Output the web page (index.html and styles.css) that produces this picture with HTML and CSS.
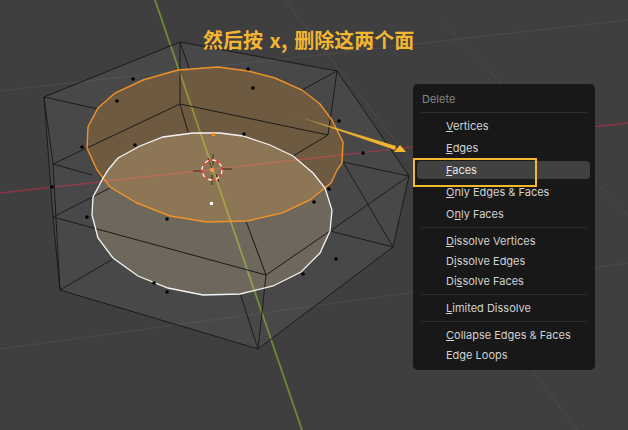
FILE: index.html
```html
<!DOCTYPE html>
<html lang="en">

<head>
    <meta charset="UTF-8">
    <title>Delete menu</title>
    <link rel="stylesheet" href="styles.css">
</head>

<body>
    <div class="viewport">
        <!-- 3D scene -->
        <svg class="scene" width="628" height="430" viewBox="0 0 628 430">
            <defs>
                <linearGradient id="arrowFade" gradientUnits="userSpaceOnUse" x1="292" y1="115" x2="400" y2="150">
                    <stop offset="0" stop-color="#f5b92e" stop-opacity="0.1"/>
                    <stop offset="0.4" stop-color="#f5b92e" stop-opacity="0.85"/>
                    <stop offset="1" stop-color="#f5b92e"/>
                </linearGradient>
            </defs>

            <!-- floor grid -->
            <g class="grid">
                <line x1="0" y1="349" x2="628" y2="263"/>
                <line x1="0" y1="91" x2="628" y2="20"/>
                <line x1="285" y1="0" x2="413" y2="163"/>
                <line x1="440" y1="20" x2="628" y2="215"/>
                <line x1="532" y1="370" x2="577" y2="430"/>
            </g>

            <!-- axes -->
            <line class="axis-x" x1="0" y1="193" x2="628" y2="123"/>
            <line class="axis-y" x1="155" y1="0" x2="302" y2="430"/>

            <!-- faces -->
            <polygon class="cage" points="44,97 180,42 337,71 409,176 393,247 258,349 60,290 53,217"/>
            <polygon class="face-orange" points="87,148 88,127 98,108 115,93 143,80 178,70 218,67 248,71 275,78 302,90 320,104 332,120 343,142 342,163 337,170 331,183 310,200 282,213 247,221 207,222 170,216 137,203 110,187 97,170"/>
            <polygon class="face-white" points="108,170 118,158 140,146 163,137 193,133 220,133 243,136 270,145 293,156 313,173 325,188 332,210 330,231 320,253 301,272 273,286 240,294 203,295 168,288 138,276 113,258 98,238 92,215 93,197 102,180"/>

            <!-- wire edges -->
            <path class="wire" d="M44 97L180 42L337 71L409 176L393 247L258 349L60 290L53 217L44 97
                M44 97L53 164L60 290
                M53 164L180 104L328 135L337 71
                M53 164L92 175
                M53 217L110 188
                M53 217L266 275L258 349
                M60 290L113 259
                M240 293L258 349
                M266 275L246 221
                M266 275L330 231L409 176
                M330 231L393 247
                M343 162L393 247
                M343 162L409 176
                M328 135L293 156
                M180 42L180 104L188 132
                M44 97L98 109
                M337 71L302 90
                M180 42L189 68"/>

            <!-- selected outlines -->
            <polygon class="edge-orange" points="87,148 88,127 98,108 115,93 143,80 178,70 218,67 248,71 275,78 302,90 320,104 332,120 343,142 342,163 337,170 331,183 310,200 282,213 247,221 207,222 170,216 137,203 110,187 97,170"/>
            <polygon class="edge-white" points="108,170 118,158 140,146 163,137 193,133 220,133 243,136 270,145 293,156 313,173 325,188 332,210 330,231 320,253 301,272 273,286 240,294 203,295 168,288 138,276 113,258 98,238 92,215 93,197 102,180"/>

            <!-- face dots -->
            <g class="dots">
                <circle cx="133" cy="79" r="1.8"/>
                <circle cx="117" cy="101" r="1.8"/>
                <circle cx="82" cy="147" r="1.8"/>
                <circle cx="135" cy="145" r="1.8"/>
                <circle cx="52" cy="187" r="1.8"/>
                <circle cx="87" cy="217" r="1.8"/>
                <circle cx="167" cy="219" r="1.8"/>
                <circle cx="154" cy="283" r="1.8"/>
                <circle cx="167" cy="292" r="1.8"/>
                <circle cx="244" cy="134" r="1.8"/>
                <circle cx="248" cy="69" r="1.8"/>
                <circle cx="253" cy="88" r="1.8"/>
                <circle cx="339" cy="121" r="1.8"/>
                <circle cx="363" cy="153" r="1.8"/>
                <circle cx="329" cy="189" r="1.8"/>
                <circle cx="314" cy="202" r="1.8"/>
                <circle cx="336" cy="259" r="1.8"/>
                <circle cx="303" cy="274" r="1.8"/>
            </g>
            <rect class="dot-white" x="210" y="202" width="3" height="3"/>
            <rect class="dot-orange" x="212" y="133" width="3" height="3"/>

            <!-- 3D cursor -->
            <path class="cursor-ticks" d="M213 154V165M212 175V185M193 171H202M222 169H232M208 158L212 168M216 174L219 182"/>
            <circle class="cursor-red" cx="212" cy="170" r="10"/>
            <circle class="cursor-white" cx="212" cy="170" r="10"/>
            <circle class="dot-origin" cx="212" cy="170" r="2"/>

            <!-- arrow -->
            <polygon fill="url(#arrowFade)" points="292,114.5 396,146 395,150"/>
            <polygon class="arrow-head" points="406,152 400,145 394,152"/>
        </svg>

        <h1 class="caption">然后按 x, 删除这两个面</h1>

        <div class="menu">
            <div class="menu-title">Delete</div>
            <div class="menu-sep menu-sep-title"></div>
            <div class="menu-item tall"><u>V</u>ertices</div>
            <div class="menu-item tall"><u>E</u>dges</div>
            <div class="menu-item tall active"><u>F</u>aces</div>
            <div class="menu-item tall"><u>O</u>nly Edges &amp; Faces</div>
            <div class="menu-item tall">O<u>n</u>ly Faces</div>
            <div class="menu-sep"></div>
            <div class="menu-item"><u>D</u>issolve Vertices</div>
            <div class="menu-item">D<u>i</u>ssolve Edges</div>
            <div class="menu-item">Di<u>s</u>solve Faces</div>
            <div class="menu-sep"></div>
            <div class="menu-item"><u>L</u>imited Dissolve</div>
            <div class="menu-sep"></div>
            <div class="menu-item"><u>C</u>ollapse Edges &amp; Faces</div>
            <div class="menu-item">Ed<u>g</u>e Loops</div>
            <div class="menu-mark"></div>
        </div>
    </div>
</body>

</html>
```
FILE: styles.css
```css
/* General Styles */
body {
    margin: 0;
    background-color: #3f3f3f;
}

.viewport {
    position: relative;
    width: 628px;
    height: 430px;
    overflow: hidden;
    background-color: #3f3f3f;
}

.scene {
    position: absolute;
    left: 0;
    top: 0;
}

/* Scene */
.grid line {
    stroke: #4c4c4c;
    stroke-width: 1;
}

.axis-x {
    stroke: #8a3546;
    stroke-width: 1.4;
}

.axis-y {
    stroke: #6d8c30;
    stroke-width: 1.8;
}

.cage {
    fill: rgba(255, 255, 255, 0.047);
}

.face-orange {
    fill: rgba(255, 160, 44, 0.21);
}

.face-white {
    fill: rgba(255, 220, 167, 0.21);
}

.wire {
    fill: none;
    stroke: #1b1b1b;
    stroke-width: 1;
}

.edge-orange {
    fill: none;
    stroke: #f0922a;
    stroke-width: 1.4;
}

.edge-white {
    fill: none;
    stroke: #f4f4f4;
    stroke-width: 1.3;
}

.dots circle {
    fill: #000;
}

.dot-white {
    fill: #fff;
}

.dot-orange {
    fill: #f0922a;
}

.dot-origin {
    fill: #f5a040;
}

.cursor-ticks {
    fill: none;
    stroke: #3a2c1e;
    stroke-width: 1;
}

.cursor-red {
    fill: none;
    stroke: #e8432f;
    stroke-width: 1.4;
}

.cursor-white {
    fill: none;
    stroke: #f2f2f2;
    stroke-width: 1.4;
    stroke-dasharray: 4 3.85;
}

.arrow-head {
    fill: #f5b92e;
}

/* Caption */
.caption {
    position: absolute;
    left: 203px;
    top: 25px;
    margin: 0;
    font-family: "Noto Sans CJK SC", sans-serif;
    font-size: 20px;
    font-weight: 700;
    line-height: 29px;
    word-spacing: 2px;
    color: #f2b632;
    white-space: nowrap;
}

/* Menu */
.menu {
    position: absolute;
    left: 413px;
    top: 84px;
    box-sizing: border-box;
    width: 182px;
    height: 286px;
    padding: 6px 5px 6px 4px;
    background-color: #181818;
    border-radius: 5px;
    font-family: "Inter", sans-serif;
    font-size: 11px;
    color: #d2d2d2;
}

.menu-title {
    height: 18px;
    padding-left: 5px;
    line-height: 18px;
    color: #868686;
}

.menu-sep {
    height: 1px;
    margin: 3px 3px 3px 4px;
    background-color: #2e2e2e;
}

.menu-sep-title {
    margin: 4px 3px 4px 4px;
}

.menu-item {
    height: 20px;
    padding-left: 29px;
    line-height: 20px;
    white-space: nowrap;
}

.menu-item.tall {
    height: 18px;
    margin-bottom: 4px;
    line-height: 18px;
}

.menu-item.active {
    background-color: #414141;
    border-radius: 4px;
    color: #e6e6e6;
}

/* Yellow callout round the Faces row */
.menu-mark {
    position: absolute;
    left: 0;
    top: 74px;
    box-sizing: border-box;
    width: 124px;
    height: 29px;
    border: 2px solid #f5b92e;
}
```
